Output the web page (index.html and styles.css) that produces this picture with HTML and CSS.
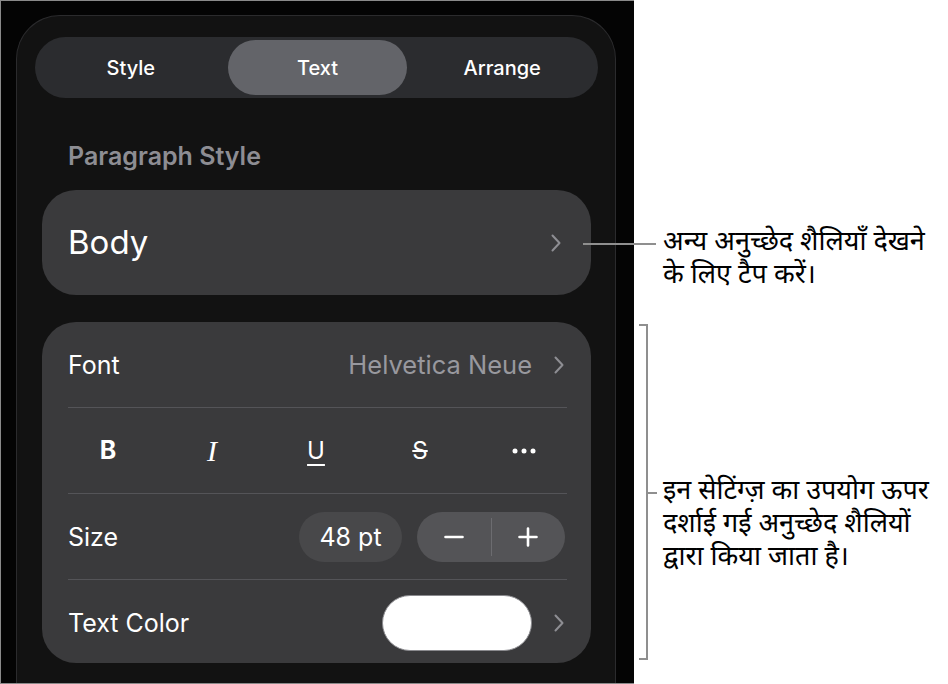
FILE: index.html
```html
<!DOCTYPE html>
<html lang="hi">
<head>
<meta charset="utf-8">
<title>Text inspector</title>
<link rel="stylesheet" href="styles.css">
</head>
<body>
<div class="figure">
  <div class="shot">
    <div class="panel">
      <div class="segmented">
        <div class="seg">Style</div>
        <div class="seg active">Text</div>
        <div class="seg">Arrange</div>
      </div>
      <div class="section-title">Paragraph Style</div>
      <div class="card body-card">
        <span class="body-label">Body</span>
        <svg class="chev" width="10" height="18" viewBox="0 0 10 18"><path d="M1.5 1.5 L8.5 9 L1.5 16.5" fill="none" stroke="#8e8e93" stroke-width="2" stroke-linecap="round" stroke-linejoin="round"/></svg>
      </div>
      <div class="card settings">
        <div class="row">
          <span class="label">Font</span>
          <span class="right">
            <span class="value">Helvetica Neue</span>
            <svg class="chev" width="10" height="18" viewBox="0 0 10 18"><path d="M1.5 1.5 L8.5 9 L1.5 16.5" fill="none" stroke="#8e8e93" stroke-width="2" stroke-linecap="round" stroke-linejoin="round"/></svg>
          </span>
        </div>
        <div class="divider"></div>
        <div class="row styles-row">
          <span class="st bold">B</span>
          <span class="st ital">I</span>
          <span class="st under">U</span>
          <span class="st strike">S</span>
          <span class="st more"><svg width="24" height="6" viewBox="0 0 24 6"><circle cx="3" cy="3" r="2.5" fill="#fff"/><circle cx="12" cy="3" r="2.5" fill="#fff"/><circle cx="21" cy="3" r="2.5" fill="#fff"/></svg></span>
        </div>
        <div class="divider"></div>
        <div class="row">
          <span class="label">Size</span>
          <span class="right size-ctrls">
            <span class="pt-pill">48 pt</span>
            <span class="stepper">
              <span class="step"><svg width="20" height="20" viewBox="0 0 20 20"><path d="M1.5 10 H18.5" stroke="#fff" stroke-width="2.6" stroke-linecap="round"/></svg></span>
              <span class="step-div"></span>
              <span class="step"><svg width="20" height="20" viewBox="0 0 20 20"><path d="M1.5 10 H18.5 M10 1.5 V18.5" stroke="#fff" stroke-width="2.6" stroke-linecap="round"/></svg></span>
            </span>
          </span>
        </div>
        <div class="divider"></div>
        <div class="row">
          <span class="label">Text Color</span>
          <span class="right">
            <span class="swatch"></span>
            <svg class="chev" width="10" height="18" viewBox="0 0 10 18"><path d="M1.5 1.5 L8.5 9 L1.5 16.5" fill="none" stroke="#8e8e93" stroke-width="2" stroke-linecap="round" stroke-linejoin="round"/></svg>
          </span>
        </div>
      </div>
    </div>
  </div>

  <div class="callout callout-top">
    <span class="leader"></span>
    <p class="note">अन्य अनुच्छेद शैलियाँ देखने<br>के लिए टैप करें।</p>
  </div>

  <div class="bracket"></div>
  <div class="callout callout-bottom">
    <span class="tick"></span>
    <p class="note">इन सेटिंग्ज़ का उपयोग ऊपर<br>दर्शाई गई अनुच्छेद शैलियों<br>द्वारा किया जाता है।</p>
  </div>
</div>
</body>
</html>
```
FILE: styles.css
```css
* { box-sizing: border-box; }
html, body { margin: 0; padding: 0; background: #fff; }
body { font-family: Inter, "Noto Sans", sans-serif; }

.figure {
  position: relative;
  width: 948px;
  height: 684px;
}

.shot {
  width: 634px;
  height: 684px;
  border: 1px solid #8a8a8a;
  border-right: none;
  background: #040404;
  overflow: hidden;
}

.panel {
  margin: 14px 0 0 15px;
  width: 600px;
  height: 700px;
  border: 1px solid #2b2b2d;
  border-bottom: none;
  border-radius: 44px 44px 0 0;
  background: #121212;
  padding-top: 21px;
}

.segmented {
  margin: 0 17px 0 18px;
  height: 61px;
  border-radius: 31px;
  background: #2b2c2f;
  padding: 3px;
  display: grid;
  grid-template-columns: 1fr 1fr 1fr;
}
.seg {
  display: flex;
  align-items: center;
  justify-content: center;
  color: #fff;
  font-size: 20px;
  font-weight: 500;
  border-radius: 28px;
}
.seg.active {
  background: #636469;
  margin: 0 2px 0 4px;
}

.section-title {
  margin: 44px 0 0 51px;
  font-size: 25px;
  line-height: 28px;
  font-weight: 600;
  color: #8d8d93;
}

.card {
  margin: 0 24px 0 25px;
  background: #3a3a3c;
  border-radius: 34px;
}

.body-card {
  margin-top: 20px;
  height: 105px;
  display: flex;
  align-items: center;
  justify-content: space-between;
  padding: 0 27px 0 26px;
}
.body-label {
  color: #fff;
  font-size: 33px;
  line-height: 1;
}

.settings {
  margin-top: 27px;
  height: 341px;
  padding: 0 24px 0 26px;
}

.row {
  height: 85px;
  display: flex;
  align-items: center;
  justify-content: space-between;
}
.label {
  color: #fff;
  font-size: 25px;
}
.right {
  display: flex;
  align-items: center;
}
.value {
  color: #98989e;
  font-size: 25.5px;
  margin-right: 22px;
}
.chev { display: block; margin-right: 3px; }

.divider {
  height: 1px;
  background: #545458;
}

.styles-row {
  display: grid;
  grid-template-columns: repeat(5, 104px);
  margin: 0 -10px 0 -12px;
  justify-content: start;
  align-items: center;
}
.st {
  text-align: center;
  color: #fff;
  font-size: 24px;
  line-height: 1;
}
.bold { font-weight: 700; font-size: 25px; }
.ital { font-family: "Liberation Serif", serif; font-style: italic; font-size: 30px; }
.under { text-decoration: underline; text-underline-offset: 5px; text-decoration-thickness: 1.5px; }
.strike { text-decoration: line-through; text-decoration-thickness: 1.5px; }
.more { display: flex; justify-content: center; }
.more svg { display: block; }

.size-ctrls { gap: 15px; margin-right: 2px; }
.pt-pill {
  width: 103px;
  height: 50px;
  border-radius: 25px;
  background: #48484a;
  color: #fff;
  font-size: 25px;
  display: flex;
  align-items: center;
  justify-content: center;
}
.stepper {
  width: 148px;
  height: 50px;
  border-radius: 25px;
  background: #545457;
  display: flex;
  align-items: center;
}
.step {
  flex: 1;
  display: flex;
  align-items: center;
  justify-content: center;
}
.step svg { display: block; }
.step-div {
  width: 1px;
  height: 38px;
  background: #6c6c70;
}

.swatch {
  width: 150px;
  height: 56px;
  border-radius: 28px;
  background: #fff;
  border: 1px solid #8a8a8e;
  margin-right: 22px;
}

/* callouts */
.callout {
  position: absolute;
  display: flex;
  align-items: flex-start;
}
.note {
  margin: 0;
  font-family: "Noto Sans Devanagari", "Noto Sans", "Lohit Devanagari", sans-serif;
  font-size: 27px;
  line-height: 33px;
  color: #000;
}
.callout-top {
  left: 583px;
  top: 227px;
}
.leader {
  width: 73px;
  height: 2px;
  background: #8f8f8f;
  margin: 16px 7px 0 0;
}
.bracket {
  position: absolute;
  left: 639px;
  top: 324px;
  width: 9px;
  height: 336px;
  border: 2px solid #8f8f8f;
  border-left: none;
}
.callout-bottom {
  left: 646px;
  top: 476px;
}
.tick {
  width: 11px;
  height: 2px;
  background: #8f8f8f;
  margin: 16px 6px 0 0;
}
```
